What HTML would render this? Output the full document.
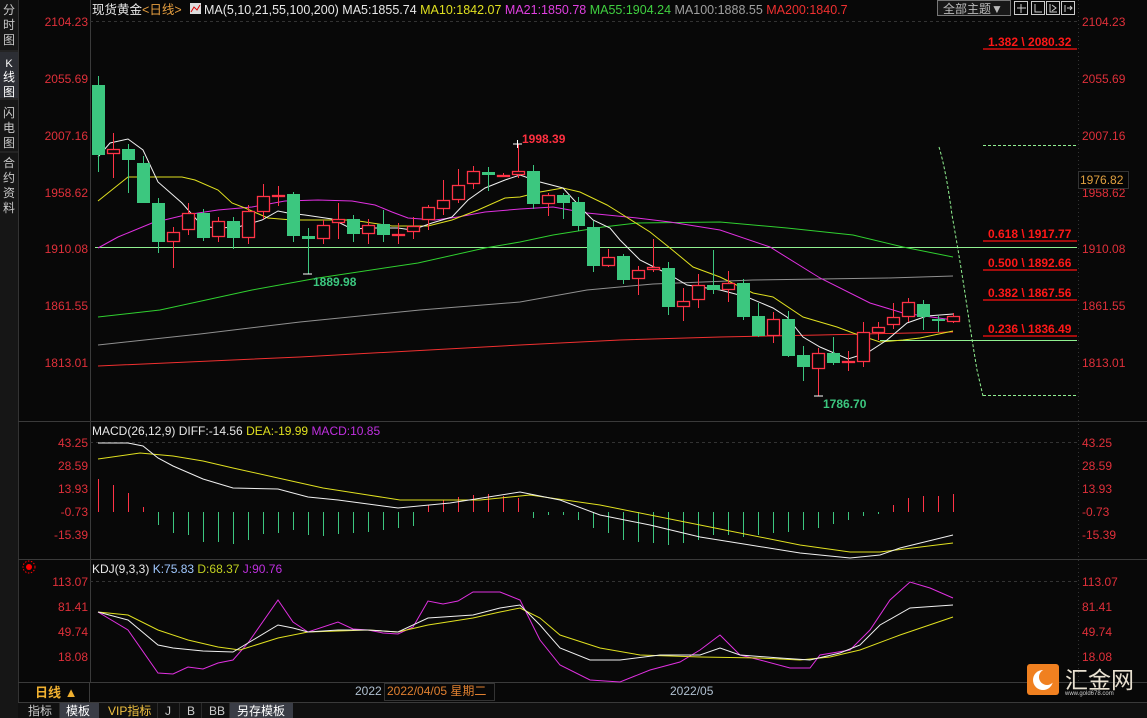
<!DOCTYPE html>
<html><head><meta charset="utf-8"><style>
html,body{margin:0;padding:0;background:#080808;width:1147px;height:718px;overflow:hidden;font-family:"Liberation Sans","Noto Sans CJK SC",sans-serif}
svg{display:block}
</style></head><body>
<svg id="s" width="1147" height="718" xmlns="http://www.w3.org/2000/svg" font-family="Liberation Sans, Noto Sans CJK SC, sans-serif">
<rect width="1147" height="718" fill="#080808"/>
<!-- left sidebar -->
<rect x="0" y="0" width="18" height="718" fill="#161616"/>
<rect x="0" y="52" width="18" height="46" fill="#2c2e34"/>
<line x1="18.5" y1="0" x2="18.5" y2="703" stroke="#333"/>
<g fill="#c8c8c8" font-size="12" text-anchor="middle">
<text x="9" y="14">分</text><text x="9" y="29">时</text><text x="9" y="44">图</text>
<text x="9" y="67" fill="#fff" font-size="11">K</text><text x="9" y="81" fill="#fff">线</text><text x="9" y="96" fill="#fff">图</text>
<text x="9" y="117">闪</text><text x="9" y="132">电</text><text x="9" y="147">图</text>
<text x="9" y="167">合</text><text x="9" y="182">约</text><text x="9" y="197">资</text><text x="9" y="212">料</text>
</g>
<line x1="0" y1="51" x2="18" y2="51" stroke="#333"/><line x1="0" y1="99" x2="18" y2="99" stroke="#333"/><line x1="0" y1="152" x2="18" y2="152" stroke="#333"/>
<!-- axis lines -->
<line x1="90.5" y1="0" x2="90.5" y2="682" stroke="#3a3a3a"/>
<line x1="1078.5" y1="0" x2="1078.5" y2="682" stroke="#333" stroke-dasharray="1,3"/>
<line x1="18" y1="421.5" x2="1147" y2="421.5" stroke="#3a3a3a"/>
<line x1="18" y1="559.5" x2="1147" y2="559.5" stroke="#3a3a3a"/>
<line x1="18" y1="682.5" x2="1147" y2="682.5" stroke="#3a3a3a"/>
<line x1="18" y1="702.5" x2="1147" y2="702.5" stroke="#3a3a3a"/>
<line x1="90" y1="21.5" x2="1078" y2="21.5" stroke="#333" stroke-dasharray="3,3"/>
<line x1="90" y1="442.5" x2="1078" y2="442.5" stroke="#333" stroke-dasharray="3,3"/>
<line x1="90" y1="581.5" x2="1078" y2="581.5" stroke="#333" stroke-dasharray="3,3"/>
<!-- header -->
<text x="92" y="14" font-size="12.5"><tspan fill="#e8e8e8">现货黄金</tspan><tspan fill="#e8a040">&lt;日线&gt;</tspan></text>
<rect x="190" y="3" width="11" height="11" fill="#ddd"/><path d="M191 12 L194 7 L197 10 L200 5" stroke="#d00" fill="none"/>
<text x="204" y="14" font-size="12.5"><tspan fill="#e8e8e8">MA(5,10,21,55,100,200) MA5:1855.74 </tspan><tspan fill="#e0e020">MA10:1842.07 </tspan><tspan fill="#e040e0">MA21:1850.78 </tspan><tspan fill="#40d040">MA55:1904.24 </tspan><tspan fill="#a0a0a0">MA100:1888.55 </tspan><tspan fill="#f03030">MA200:1840.7</tspan></text>
<rect x="937.5" y="0.5" width="73" height="15" fill="#181818" stroke="#777"/>
<text x="943" y="13" font-size="12" fill="#bbb">全部主题▼</text>
<g fill="none" stroke="#ccc"><rect x="1014.5" y="1.5" width="13" height="13"/><rect x="1031.5" y="1.5" width="13" height="13"/><rect x="1046.5" y="1.5" width="13" height="13"/><rect x="1061.5" y="1.5" width="13" height="13"/>
<path d="M1021 4v9M1017 8h9M1035 4v8h7M1050 4v8h7M1052 5l4 3-4 3M1065 5v7M1067 8h5M1070 6l2 2-2 2"/></g>
<!-- price axis labels -->
<g fill="#e0303a" font-size="12" text-anchor="end">
<text x="88" y="26">2104.23</text><text x="88" y="83">2055.69</text><text x="88" y="140">2007.16</text><text x="88" y="197">1958.62</text><text x="88" y="253">1910.08</text><text x="88" y="310">1861.55</text><text x="88" y="367">1813.01</text>
<text x="88" y="447">43.25</text><text x="88" y="470">28.59</text><text x="88" y="493">13.93</text><text x="88" y="516">-0.73</text><text x="88" y="539">-15.39</text>
<text x="88" y="586">113.07</text><text x="88" y="611">81.41</text><text x="88" y="636">49.74</text><text x="88" y="661">18.08</text>
</g>
<g fill="#e0303a" font-size="12">
<text x="1082" y="26">2104.23</text><text x="1082" y="83">2055.69</text><text x="1082" y="140">2007.16</text><text x="1082" y="197">1958.62</text><text x="1082" y="253">1910.08</text><text x="1082" y="310">1861.55</text><text x="1082" y="367">1813.01</text>
<text x="1082" y="447">43.25</text><text x="1082" y="470">28.59</text><text x="1082" y="493">13.93</text><text x="1082" y="516">-0.73</text><text x="1082" y="539">-15.39</text>
<text x="1082" y="586">113.07</text><text x="1082" y="611">81.41</text><text x="1082" y="636">49.74</text><text x="1082" y="661">18.08</text>
</g>
<rect x="1078.5" y="171.5" width="50" height="17" fill="#050505" stroke="#333"/>
<text x="1080" y="184" font-size="12" fill="#e0a040">1976.82</text>
<!-- horizontal lines -->
<line x1="95" y1="247.5" x2="1077" y2="247.5" stroke="#90f090"/>
<line x1="880" y1="340.5" x2="1077" y2="340.5" stroke="#90f090"/>
<g stroke="#ff1010" stroke-width="1.3"><line x1="983" y1="49" x2="1077" y2="49"/><line x1="983" y1="241" x2="1077" y2="241"/><line x1="983" y1="270" x2="1077" y2="270"/><line x1="983" y1="300" x2="1077" y2="300"/><line x1="983" y1="336" x2="1077" y2="336"/></g>
<g fill="#ff1818" font-size="12" font-weight="bold">
<text x="988" y="46">1.382 \ 2080.32</text><text x="988" y="238">0.618 \ 1917.77</text><text x="988" y="267">0.500 \ 1892.66</text><text x="988" y="297">0.382 \ 1867.56</text><text x="988" y="333">0.236 \ 1836.49</text>
</g>
<g stroke="#90f090" stroke-dasharray="3,2" fill="none"><line x1="983" y1="145.5" x2="1077" y2="145.5"/><line x1="983" y1="395.5" x2="1077" y2="395.5"/>
<path d="M939 147 Q946 170 952 215 Q960 260 966 300 Q972 340 977 370 L983 396"/></g>
<g id="main"></g>
<text x="522" y="143" font-size="12" font-weight="bold" fill="#ff3040">1998.39</text>
<text x="313" y="286" font-size="12" font-weight="bold" fill="#3cc77f">1889.98</text>
<text x="823" y="408" font-size="12" font-weight="bold" fill="#3cc77f">1786.70</text>
<path d="M513 144h9M517.5 140v8M303 274h9M814 396h9" stroke="#fff"/>
<!-- MACD -->
<text x="92" y="435" font-size="12"><tspan fill="#e8e8e8">MACD(26,12,9) DIFF:-14.56 </tspan><tspan fill="#e0e020">DEA:-19.99 </tspan><tspan fill="#c030e0">MACD:10.85</tspan></text>
<g id="macd"></g>
<!-- KDJ -->
<circle cx="29" cy="567" r="3" fill="#f00"/><circle cx="29" cy="567" r="6" fill="none" stroke="#f00" stroke-dasharray="1.5,1.5"/>
<text x="92" y="573" font-size="12"><tspan fill="#e8e8e8">KDJ(9,3,3) </tspan><tspan fill="#a0c8ff">K:75.83 </tspan><tspan fill="#c0d020">D:68.37 </tspan><tspan fill="#c030e0">J:90.76</tspan></text>
<g id="kdj"></g>
<!-- bottom -->
<text x="35" y="697" font-size="13" font-weight="bold" fill="#f0b030">日线 ▲</text>
<line x1="89.5" y1="682" x2="89.5" y2="702" stroke="#3a3a3a"/>
<text x="355" y="695" font-size="12" fill="#b0c0d0">2022</text>
<rect x="384.5" y="683.5" width="110" height="17" fill="#080808" stroke="#333"/>
<text x="387" y="695" font-size="12" fill="#e08030">2022/04/05 星期二</text>
<text x="670" y="695" font-size="12" fill="#b0c0d0">2022/05</text>
<rect x="18" y="703" width="1129" height="15" fill="#101010"/>
<rect x="60" y="703" width="39" height="15" fill="#3a3d46"/>
<rect x="230" y="703" width="63" height="15" fill="#3a3d46"/>
<g font-size="12" fill="#ccc"><text x="28" y="715">指标</text><text x="66" y="715" fill="#fff">模板</text><text x="108" y="715" fill="#f0c040">VIP指标</text><text x="165" y="715">J</text><text x="187" y="715">B</text><text x="209" y="715">BB</text><text x="237" y="715" fill="#fff">另存模板</text></g>
<g stroke="#2a2a2a"><line x1="59.5" y1="703" x2="59.5" y2="718"/><line x1="157.5" y1="703" x2="157.5" y2="718"/><line x1="179.5" y1="703" x2="179.5" y2="718"/><line x1="201.5" y1="703" x2="201.5" y2="718"/><line x1="229.5" y1="703" x2="229.5" y2="718"/></g>
<!-- logo -->
<rect x="1027" y="664" width="32" height="31" rx="3" fill="#f08020"/>
<circle cx="1043" cy="680" r="10" fill="#fff"/><circle cx="1047" cy="677" r="8" fill="#f08020"/>
<text x="1065" y="688" font-size="23" fill="#e8e0d0">汇金网</text>
<text x="1065" y="695" font-size="6" fill="#ccc">www.gold678.com</text>
</svg>
<script>
var NS="http://www.w3.org/2000/svg";
function el(p,t,a){var e=document.createElementNS(NS,t);for(var k in a)e.setAttribute(k,a[k]);p.appendChild(e);return e;}
function pl(p,pts,c,w){el(p,"polyline",{points:pts.map(function(q){return q.join(",")}).join(" "),fill:"none",stroke:c,"stroke-width":w||1});}
var m=document.getElementById("main");
// MA lines
pl(m,[[98,366],[300,357],[520,345],[620,340],[720,337],[820,335],[953,332]],"#f03030");
pl(m,[[98,345],[200,334],[300,322],[420,310],[520,302],[587,290],[653,284],[753,280],[820,279],[887,278],[953,276]],"#909090");
pl(m,[[98,317],[160,310],[252,290],[318,278],[418,263],[485,248],[520,242],[553,235],[603,227],[637,223],[720,222],[787,228],[853,235],[903,247],[953,257]],"#30d030");
pl(m,[[98,248],[118,237],[152,223],[185,215],[218,210],[252,207],[285,201],[318,200],[352,201],[375,205],[392,212],[408,218],[435,220],[458,217],[485,212],[520,209],[553,207],[587,213],[637,218],[670,222],[720,230],[770,247],[820,278],[870,303],[903,313],[953,320]],"#e030e0");
pl(m,[[98,201],[128,177],[152,177],[182,177],[195,180],[218,190],[232,203],[245,208],[268,218],[292,220],[352,220],[392,226],[428,226],[452,220],[478,210],[505,198],[520,197],[540,192],[563,188],[580,192],[607,205],[620,213],[650,232],[670,248],[693,267],[720,277],[753,293],[773,297],[803,317],[837,327],[853,333],[880,342],[903,340],[920,338],[953,331]],"#e0e020");
pl(m,[[98,157],[110,143],[128,139],[143,150],[158,182],[182,203],[197,220],[208,227],[218,228],[238,227],[262,220],[278,211],[288,213],[305,215],[332,219],[352,229],[372,228],[398,228],[412,230],[432,223],[452,217],[468,200],[485,188],[505,180],[520,175],[540,182],[563,188],[583,210],[593,220],[610,228],[620,240],[640,260],[670,275],[687,285],[720,290],[747,297],[773,308],[787,317],[803,337],[820,347],[848,359],[867,353],[887,340],[907,323],[927,316],[953,314]],"#f0f0f0");
var C=[[85,155,76,172,'g'],[149,154,133,178,'r'],[149,160,144,193,'g'],[163,203,156,203,'g'],[203,242,198,253,'g'],[232,242,227,268,'r'],[213,230,203,235,'r'],[213,238,209,241,'g'],[221,237,217,242,'r'],[221,238,217,249,'g'],[211,238,205,244,'r'],[196,212,184,219,'r'],[195,196,186,206,'r'],[194,236,192,242,'g'],[236,239,228,274,'g'],[225,239,220,244,'r'],[219,223,203,239,'r'],[219,234,215,242,'g'],[225,234,219,244,'r'],[224,235,210,242,'g'],[234,235,223,244,'r'],[226,232,217,239,'r'],[207,220,205,230,'r'],[200,209,180,215,'r'],[185,200,169,203,'r'],[171,184,166,189,'r'],[172,175,167,191,'g'],[175,176,173,177,'r'],[171,175,144,178,'r'],[171,204,165,209,'g'],[195,204,193,216,'r'],[195,203,193,219,'g'],[202,226,197,231,'g'],[227,266,221,272,'g'],[257,266,249,267,'r'],[256,280,254,284,'g'],[270,279,266,295,'r'],[267,270,239,272,'r'],[268,307,262,315,'g'],[301,307,288,321,'r'],[285,300,274,308,'r'],[285,290,250,294,'g'],[283,290,271,302,'r'],[283,317,279,320,'g'],[316,336,303,337,'g'],[319,336,312,343,'r'],[319,356,311,357,'g'],[355,367,346,381,'g'],[353,369,348,396,'r'],[353,363,337,365,'g'],[361,363,351,371,'r'],[332,362,322,367,'r'],[327,333,322,340,'r'],[317,325,303,329,'r'],[302,317,298,322,'r'],[304,317,300,330,'g'],[319,321,316,332,'g'],[316,322,313,323,'r']];
C.forEach(function(c,i){var x=98+15*i;var red=c[4]=='r';var col=red?"#ff3346":"#3cc77f";
var t=Math.min(c[0],c[1]),b=Math.max(c[0],c[1]);if(b-t<2)b=t+2;
el(m,"line",{x1:x+.5,y1:c[2],x2:x+.5,y2:t,stroke:col});el(m,"line",{x1:x+.5,y1:b,x2:x+.5,y2:c[3],stroke:col});
if(red)el(m,"rect",{x:x-5.5,y:t+.5,width:12,height:b-t-1,fill:"#080808",stroke:col,"stroke-width":1.3});
else el(m,"rect",{x:x-6,y:t,width:13,height:b-t,fill:col});});
// MACD
var g=document.getElementById("macd");
var H={98:479,113:485,128:493,143:507,158:525,173:533,188:535,203:542,218:542,233:544,248:540,263:534,278:533,293:530,308:535,323:536,338:534,353:533,368:532,383:530,398:528,413:526,428:505,443:500,458:497,473:495,488:494,503:496,518:498,533:518,548:515,563:515,578:520,593:528,608:533,623:540,638:542,653:543,668:545,683:543,698:540,713:535,728:535,743:537,758:535,773:533,788:532,803:530,818:528,833:524,848:520,863:516,878:514,893:505,908:498,923:496,938:496,953:494};
for(var k in H){var v=H[k];el(g,"line",{x1:+k+.5,y1:512,x2:+k+.5,y2:v,stroke:v<512?"#ff3346":"#3cc77f"});}
pl(g,[[98,459],[140,453],[173,456],[203,461],[233,468],[278,478],[323,488],[368,495],[400,500],[480,500],[530,495],[600,505],[700,525],[800,545],[850,552],[880,552],[953,543]],"#e0e020");
pl(g,[[98,443],[128,443],[143,446],[158,458],[173,466],[203,479],[233,488],[278,489],[308,497],[338,500],[368,504],[398,508],[450,503],[520,492],[560,500],[600,515],[650,525],[700,537],[750,545],[800,553],[850,558],[880,555],[900,548],[953,535]],"#f0f0f0");
// KDJ
var q=document.getElementById("kdj");
pl(q,[[98,612],[128,630],[158,673],[173,674],[188,667],[203,669],[218,663],[233,660],[248,643],[278,600],[293,622],[308,632],[338,622],[353,629],[368,630],[383,633],[398,634],[413,627],[428,601],[443,604],[458,601],[473,592],[500,592],[520,600],[540,640],[560,665],[590,680],[620,682],[650,670],[680,662],[700,650],[720,635],[740,655],[760,660],[790,668],[810,668],[820,655],[850,650],[870,630],[890,600],[910,582],[930,588],[953,598]],"#e030e0");
pl(q,[[98,612],[128,615],[158,630],[188,640],[218,647],[240,650],[278,638],[308,632],[368,630],[398,632],[428,625],[473,618],[500,612],[520,608],[540,618],[560,635],[600,648],[640,655],[700,657],[760,658],[800,660],[830,657],[860,650],[900,635],[953,617]],"#e0e020");
pl(q,[[98,612],[128,620],[158,645],[173,648],[203,651],[233,652],[248,643],[278,625],[293,628],[308,632],[338,630],[368,630],[398,632],[428,618],[473,615],[500,608],[520,605],[540,625],[560,648],[590,660],[620,660],[660,655],[700,655],[720,648],[740,655],[780,658],[810,660],[840,653],[860,645],[880,625],[910,608],[953,605]],"#f0f0f0");
</script>
</body></html>
